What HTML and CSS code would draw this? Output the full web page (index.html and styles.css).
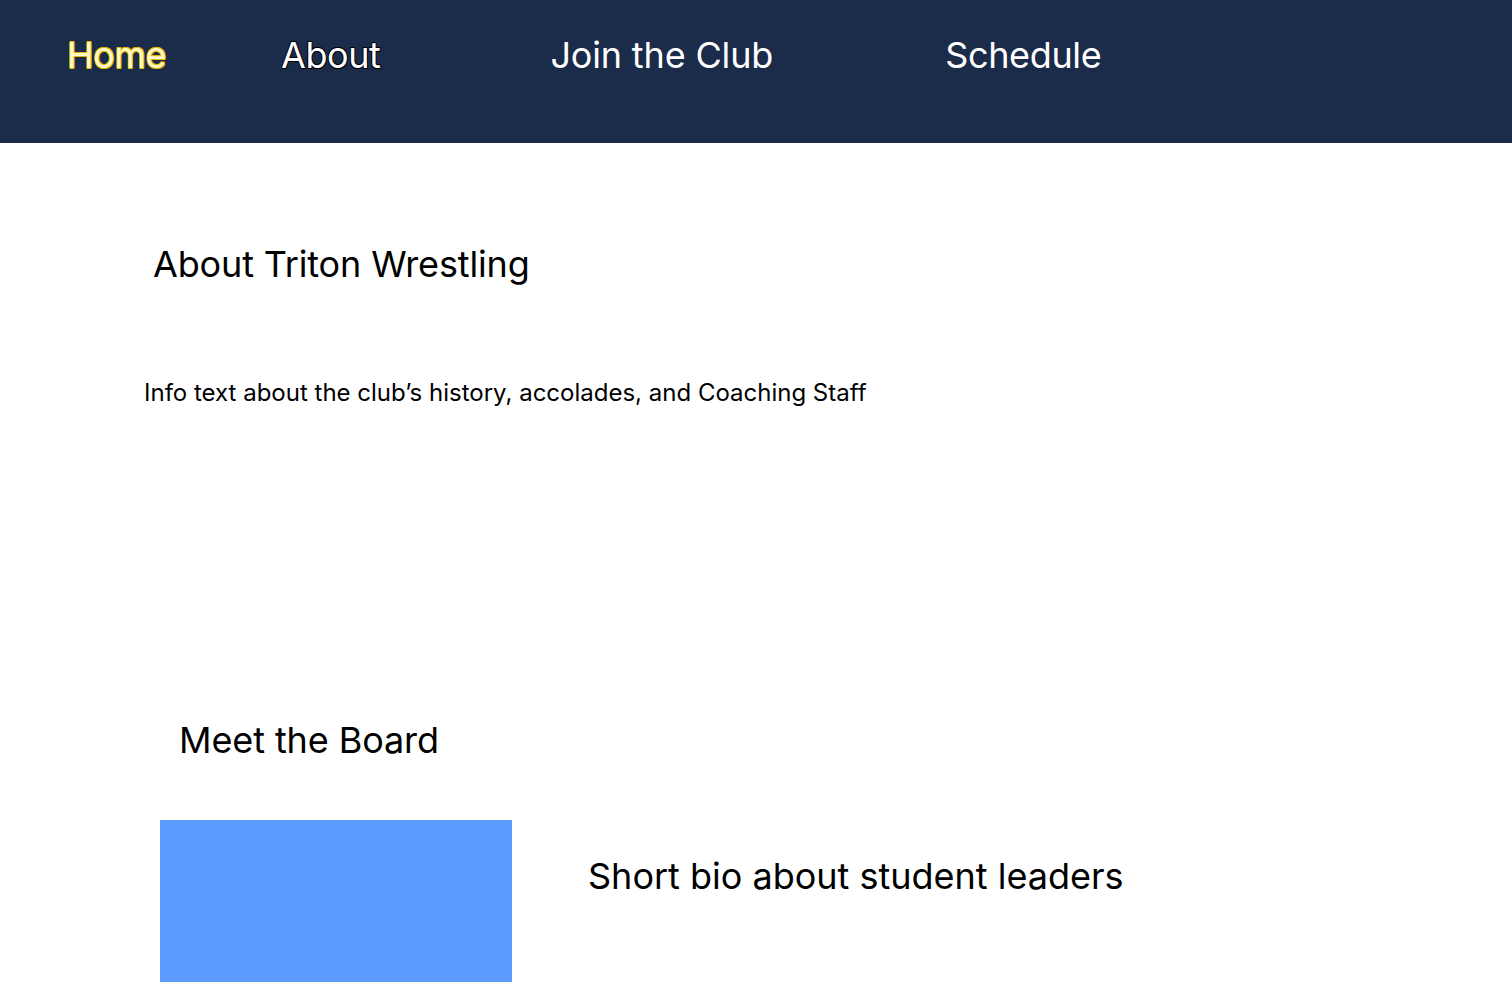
FILE: index.html
```html
<!DOCTYPE html>
<html lang="en">
<head>
<meta charset="utf-8">
<title>Triton Wrestling</title>
<link rel="stylesheet" href="styles.css">
</head>
<body>
<nav class="nav">
  <a class="nav-item nav-home" href="#">Home</a>
  <a class="nav-item nav-about" href="#">About</a>
  <a class="nav-item nav-join" href="#">Join the Club</a>
  <a class="nav-item nav-schedule" href="#">Schedule</a>
</nav>
<main class="main">
  <h1 class="title">About Triton Wrestling</h1>
  <p class="info">Info text about the club’s history, accolades, and Coaching Staff</p>
  <h2 class="board-title">Meet the Board</h2>
  <section class="board-row">
    <div class="photo"></div>
    <p class="bio">Short bio about student leaders</p>
  </section>
</main>
</body>
</html>
```
FILE: styles.css
```css
html, body {
  margin: 0;
  padding: 0;
  background: #ffffff;
  font-family: Inter, "Noto Sans", sans-serif;
  color: #000;
  overflow: hidden;
}
.nav {
  box-sizing: border-box;
  height: 143px;
  background: #1b2b4a;
  display: flex;
  align-items: flex-start;
  padding: 34px 0 0 67px;
}
.nav-item {
  font-size: 36px;
  letter-spacing: -0.45px;
  line-height: 43px;
  text-decoration: none;
  color: #ffffff;
  white-space: nowrap;
}
.nav-home {
  color: #fff8c4;
  text-shadow: -0.7px -0.7px 0 #e6b800, 0.7px -0.7px 0 #e6b800, -0.7px 0.7px 0 #e6b800, 0.7px 0.7px 0 #e6b800;
}
.nav-about {
  margin-left: 115px;
  text-shadow: -0.7px -0.7px 0 #000, 0.7px -0.7px 0 #000, -0.7px 0.7px 0 #000, 0.7px 0.7px 0 #000;
}
.nav-join {
  margin-left: 170px;
  letter-spacing: -0.15px;
}
.nav-schedule {
  margin-left: 172px;
  letter-spacing: -0.35px;
}
.main {
  display: flex;
  flex-direction: column;
  align-items: flex-start;
}
.title {
  margin: 100px 0 0 153px;
  font-size: 36px;
  letter-spacing: -0.15px;
  font-weight: 400;
  line-height: 43px;
}
.info {
  margin: 92px 0 0 144px;
  font-size: 24px;
  line-height: 29px;
}
.board-title {
  margin: 312px 0 0 179px;
  font-size: 36px;
  letter-spacing: -0.1px;
  font-weight: 400;
  line-height: 43px;
}
.board-row {
  display: flex;
  align-items: flex-start;
  margin: 58px 0 0 160px;
}
.photo {
  width: 352px;
  height: 200px;
  background: #5c9bff;
  flex: none;
}
.bio {
  margin: 35px 0 0 76px;
  font-size: 36px;
  line-height: 43px;
}
```
